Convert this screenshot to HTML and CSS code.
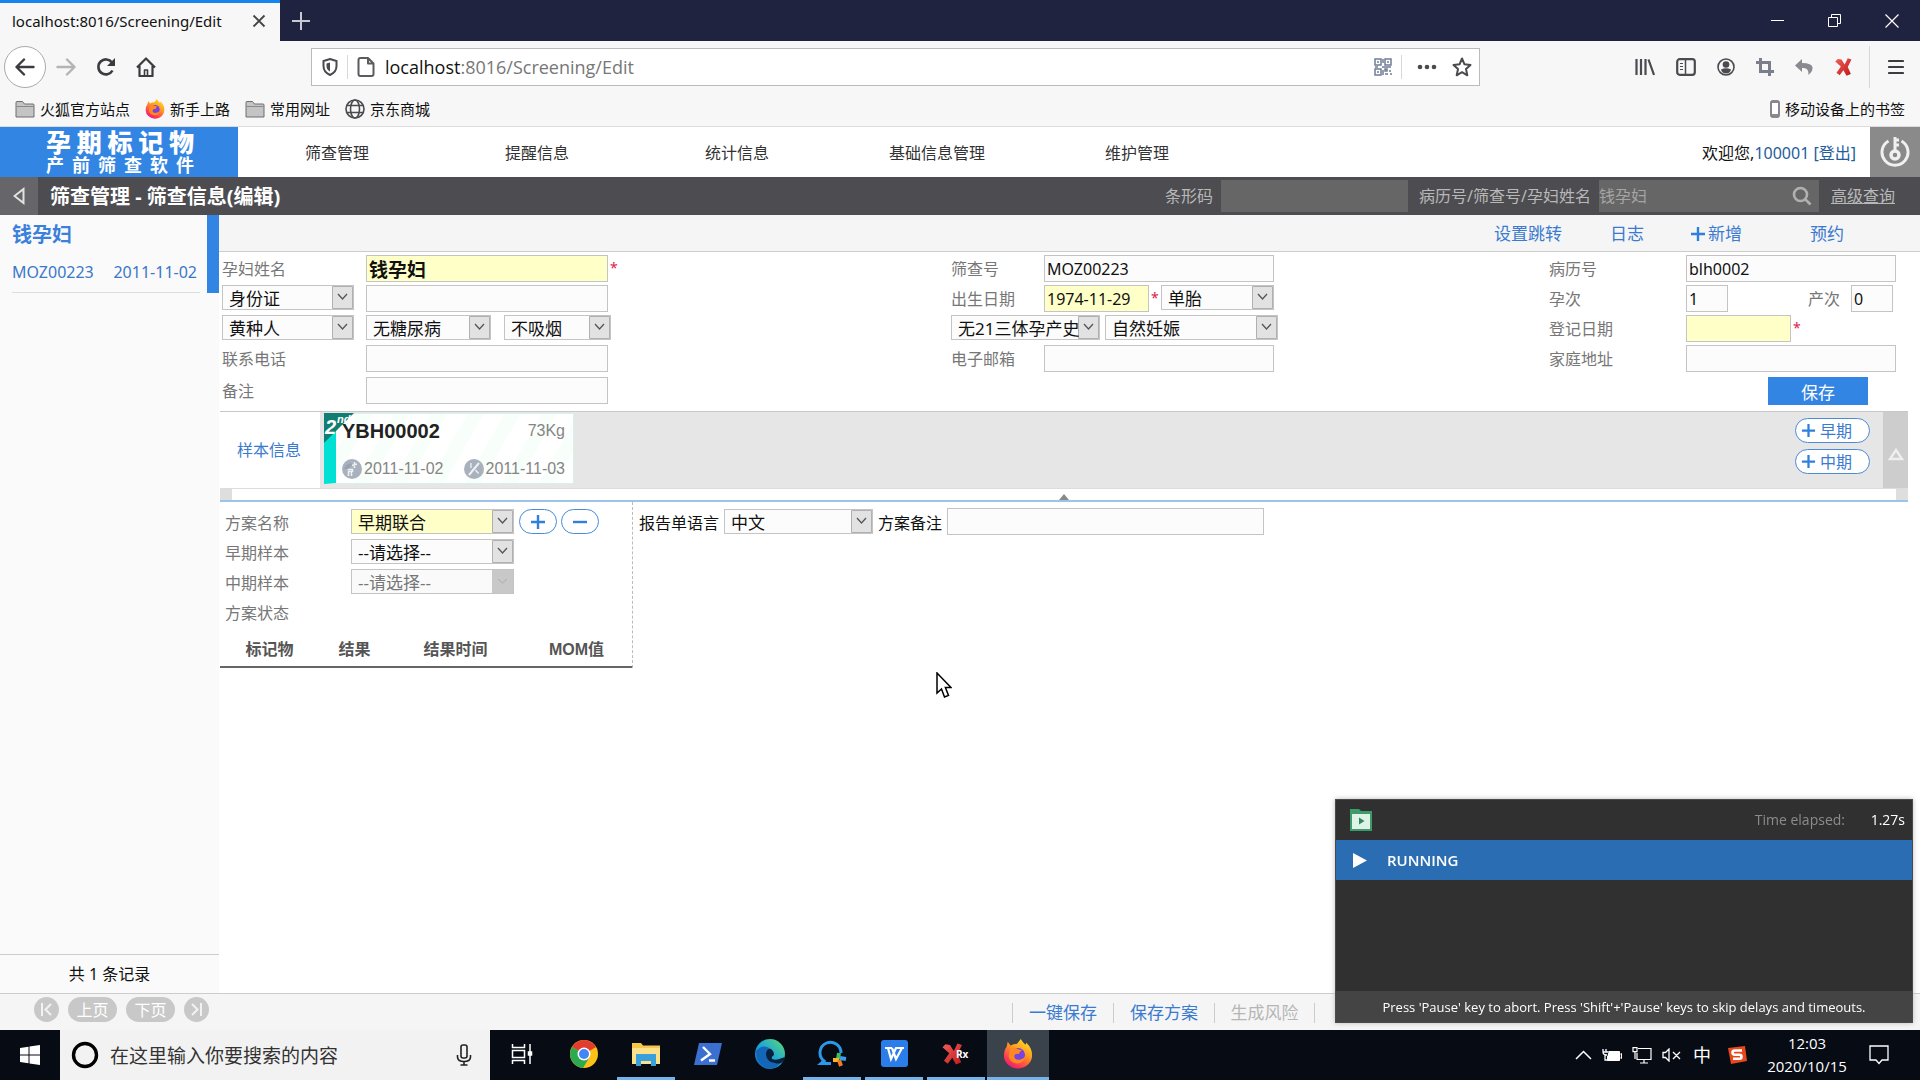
FILE: index.html
```html
<!DOCTYPE html>
<html lang="zh-CN">
<head>
<meta charset="utf-8">
<title>localhost:8016/Screening/Edit</title>
<link rel="stylesheet" href="styles.css">
</head>
<body>
<svg class="defs" width="0" height="0" aria-hidden="true">
  <defs>
    <linearGradient id="fox" x1="0.8" y1="0" x2="0.2" y2="1">
      <stop offset="0" stop-color="#ffe226"/><stop offset="0.4" stop-color="#ff9a1f"/><stop offset="0.75" stop-color="#ff3f4f"/><stop offset="1" stop-color="#e3157c"/>
    </linearGradient>
    <linearGradient id="edge" x1="0" y1="1" x2="1" y2="0">
      <stop offset="0" stop-color="#1266c8"/><stop offset="0.5" stop-color="#1fa7d8"/><stop offset="1" stop-color="#5fdc6a"/>
    </linearGradient>
    <linearGradient id="redx" x1="0" y1="0" x2="1" y2="1">
      <stop offset="0" stop-color="#f0605c"/><stop offset="1" stop-color="#c01818"/>
    </linearGradient>
    <symbol id="i-folder" viewBox="0 0 20 20"><path d="M1 18V3.500q0-1 1-1h5.500l2 2.500H18q1 0 1 1v12z" fill="#c4c4c4" stroke="#6e6e6e"/><path d="M1.500 7.500h17" stroke="#8a8a8a"/></symbol>
    <symbol id="i-firefox" viewBox="0 0 32 32"><path d="M4 8l1-5 3 4q3-2 7-2l4-5q2 4 5 6l1-2q6 6 6 13a15 14 0 0 1-30 1q0-6 3-10z" fill="url(#fox)"/><circle cx="16" cy="17" r="7.500" fill="#7a42e0"/><path d="M8 11q4-3 8 0l4 1q-3 2-3 4-5-1-5 3 1 4 6 3 5-1 6-5-1 9-9 9-8-1-9-8z" fill="#ff8a20"/></symbol>
    <symbol id="i-redx" viewBox="0 0 32 32"><path d="M6 3l6 1 5 8 5-10 6 2-6 12 5 11-7 3-5-9-6 8-5-4 7-10-9-8z" fill="url(#redx)"/></symbol>
    <symbol id="i-plus" viewBox="0 0 16 16"><path d="M8 1v14M1 8h14" stroke="#2f80dd" stroke-width="2.400"/></symbol>
  </defs>
</svg>

<div class="tabbar">
  <div class="tab"><span>localhost:8016/Screening/Edit</span>
    <button class="plain" aria-label="关闭标签页"><svg width="14" height="14" viewBox="0 0 14 14"><path d="M1.500 1.500l11 11M12.500 1.500l-11 11" stroke="#444" stroke-width="1.800"/></svg></button>
  </div>
  <button class="plain newtab" aria-label="新建标签页"><svg width="18" height="18" viewBox="0 0 18 18"><path d="M9 0v18M0 9h18" stroke="#c9c9d4" stroke-width="2"/></svg></button>
  <div class="winctl">
    <button class="plain" aria-label="最小化"><svg width="13" height="13" viewBox="0 0 13 13"><path d="M0 6.500h13" stroke="#fff"/></svg></button>
    <button class="plain" aria-label="还原"><svg width="13" height="13" viewBox="0 0 13 13" fill="none" stroke="#fff"><path d="M.5 3.500h9v9h-9zM3.500 3.500v-3h9v9h-3"/></svg></button>
    <button class="plain" aria-label="关闭"><svg width="14" height="14" viewBox="0 0 14 14"><path d="M.5 .5l13 13M13.500 .5l-13 13" stroke="#fff" stroke-width="1.200"/></svg></button>
  </div>
</div>

<div class="navbar">
  <button class="plain back" aria-label="后退"><svg width="20" height="18" viewBox="0 0 20 18" fill="none" stroke="#3c3c40" stroke-width="2.400" stroke-linecap="round" stroke-linejoin="round"><path d="M18.500 9H2M9 1.500L1.500 9 9 16.500"/></svg></button>
  <button class="plain nav-btn" aria-label="前进"><svg width="20" height="18" viewBox="0 0 20 18" fill="none" stroke="#b4b4b6" stroke-width="2.400" stroke-linecap="round" stroke-linejoin="round"><path d="M1.500 9H18M11 1.500L18.500 9 11 16.500"/></svg></button>
  <button class="plain nav-btn" aria-label="刷新"><svg width="20" height="20" viewBox="0 0 20 20"><path d="M16.500 13.500a7.500 7.500 0 1 1-.5-8" fill="none" stroke="#3c3c40" stroke-width="2.600"/><path d="M19 1v8h-8z" fill="#3c3c40"/></svg></button>
  <button class="plain nav-btn" aria-label="主页"><svg width="20" height="20" viewBox="0 0 20 20" fill="none" stroke="#3c3c40" stroke-width="2.200" stroke-linejoin="round"><path d="M1 10.500L10 1.500l9 9M3.500 9v10h13V9"/><path d="M8.500 19v-6h3v6" stroke-width="1.600"/></svg></button>
  <div class="urlbar">
    <svg width="16" height="18" viewBox="0 0 16 18"><path d="M8 1l6.500 2v5q0 6-6.500 9-6.500-3-6.500-9V3z" fill="none" stroke="#4a4a4f" stroke-width="2"/><path d="M8 4.500v9q-3.500-2-3.500-5.500V5.500z" fill="#4a4a4f"/></svg>
    <i class="vline"></i>
    <svg width="18" height="20" viewBox="0 0 18 20" fill="none" stroke="#5b5b60" stroke-width="2" stroke-linejoin="round"><path d="M1.500 3q0-2 2-2H11l5.500 5.500V17q0 2-2 2h-11q-2 0-2-2zM11 1v5.500h5.500"/></svg>
    <div class="url"><b>localhost</b>:8016/Screening/Edit</div>
    <svg width="18" height="18" viewBox="0 0 18 18" fill="none" stroke="#6f7f96" stroke-width="1.500"><path d="M1 1h6v6H1zM11 1h6v6h-6zM1 11h6v6H1z"/><path d="M3 4h2M13 4h2M3 14h2M9 1v4M8 9h9M1 9h3M11 11h2v2h-2zM15 13h2M11 16h3M16 16h2M9 12v5"/></svg>
    <i class="vline gap-s"></i>
    <svg class="dots" width="20" height="6" viewBox="0 0 20 6" fill="#4a4a4f"><circle cx="3" cy="3" r="2.300"/><circle cx="10" cy="3" r="2.300"/><circle cx="17" cy="3" r="2.300"/></svg>
    <svg width="20" height="20" viewBox="0 0 20 20" fill="none" stroke="#4a4a4f" stroke-width="2" stroke-linejoin="round"><path d="M10 1.500l2.500 5.800 6 .6-4.500 4.200 1.300 6.200L10 15.200l-5.300 3.100L6 12.100 1.500 7.900l6-.6z"/></svg>
  </div>
  <div class="tools">
    <svg width="20" height="18" viewBox="0 0 20 18" stroke="#4a4a4f" stroke-width="2.200"><path d="M1.500 1v16M6 1v16M10.500 1v16M13.500 1.500L19 17"/></svg>
    <svg width="20" height="18" viewBox="0 0 20 18" fill="none" stroke="#4a4a4f" stroke-width="2.200"><rect x="1.200" y="1.200" width="17.600" height="15.600" rx="2.500"/><path d="M9.500 2v14" stroke-width="1.500"/><path d="M4 5.500h3M4 8.500h3M4 11.500h3" stroke-width="1.200"/></svg>
    <svg width="18" height="18" viewBox="0 0 18 18"><circle cx="9" cy="9" r="8" fill="none" stroke="#4a4a4f" stroke-width="1.600"/><circle cx="9" cy="6.500" r="3.300" fill="#4a4a4f"/><path d="M4 11.500q5-2.500 10 0-1 4-5 4t-5-4z" fill="#4a4a4f"/></svg>
    <svg width="18" height="18" viewBox="0 0 18 18" fill="none" stroke="#7b7f8c" stroke-width="3"><path d="M4.500 0v13.500H18M0 4.500h13.500V18"/></svg>
    <svg width="18" height="18" viewBox="0 0 18 18"><path d="M7 1L0 7.500 7 14v-4q7-1 6.500 7Q18 13 17.500 9.500 17 5 7 5z" fill="#8a8a90"/></svg>
    <svg width="20" height="22"><use href="#i-redx"/></svg>
    <i class="vline tall"></i>
    <svg width="16" height="16" viewBox="0 0 16 16" stroke="#3c3c40" stroke-width="2.200" stroke-linecap="round"><path d="M1 2h14M1 8h14M1 14h14"/></svg>
  </div>
</div>

<div class="bookmarks">
  <a href="#"><svg width="20" height="20"><use href="#i-folder"/></svg>火狐官方站点</a>
  <a href="#"><svg width="20" height="20"><use href="#i-firefox"/></svg>新手上路</a>
  <a href="#"><svg width="20" height="20"><use href="#i-folder"/></svg>常用网址</a>
  <a href="#"><svg width="20" height="20" viewBox="0 0 20 20" fill="none" stroke="#4a4a4f" stroke-width="1.600"><circle cx="10" cy="10" r="9"/><ellipse cx="10" cy="10" rx="4.500" ry="9"/><path d="M2 6.500h16M2 13.500h16"/></svg>京东商城</a>
  <a href="#" class="mobile"><svg width="10" height="18" viewBox="0 0 10 18"><rect x=".7" y=".7" width="8.600" height="16.600" rx="1.500" fill="#8a8a90" stroke="#77777c"/><path d="M2 3h6v11H2z" fill="#fff"/></svg>移动设备上的书签</a>
</div>

<header class="site-head">
  <div class="logo"><strong>孕期标记物</strong><em>产前筛查软件</em></div>
  <nav class="menu"><a href="#">筛查管理</a><a href="#">提醒信息</a><a href="#">统计信息</a><a href="#">基础信息管理</a><a href="#">维护管理</a></nav>
  <p class="welcome">欢迎您,<a href="#">100001</a> <a href="#">[登出]</a></p>
  <button class="plain keybtn" aria-label="修改密码"><svg width="30" height="32" viewBox="0 0 30 32" fill="none" stroke="#f0f0f0"><path d="M8.500 5A13 13 0 1 0 21.500 5" stroke-width="3"/><circle cx="15" cy="19" r="4" stroke-width="3.500"/><path d="M15 15V1M15 4h4M15 9h4" stroke-width="3"/></svg></button>
</header>

<div class="titlebar">
  <button class="plain prev" aria-label="返回"><svg width="12" height="18" viewBox="0 0 12 18"><path d="M10.500 2v14L1.500 9z" fill="none" stroke="#e2e2e2" stroke-width="2"/></svg></button>
  <h1>筛查管理 - 筛查信息(编辑)</h1>
  <label for="barcode">条形码</label><input id="barcode" class="barcode">
  <label for="query" class="q-label">病历号/筛查号/孕妇姓名</label>
  <div class="query"><input id="query" placeholder="钱孕妇"><svg width="20" height="20" viewBox="0 0 20 20" fill="none" stroke="#b0b0b0" stroke-width="2.600"><circle cx="8.500" cy="8.500" r="6.500"/><path d="M13.500 13.500L18.500 18.500"/></svg></div>
  <a href="#" class="adv">高级查询</a>
</div>

<div class="content">
  <aside class="sidebar">
    <a href="#" class="patient"><strong>钱孕妇</strong><span><span>MOZ00223</span><span>2011-11-02</span></span></a>
    <p class="total">共 1 条记录</p>
  </aside>

  <main>
    <div class="actions"><a href="#">设置跳转</a><a href="#">日志</a><a href="#"><svg width="16" height="16"><use href="#i-plus"/></svg>新增</a><a href="#">预约</a></div>

    <form class="info">
      <div class="col c1">
        <div class="row"><label for="name">孕妇姓名</label><input id="name" class="w-l need strong" value="钱孕妇"><sup>*</sup></div>
        <div class="row"><div class="cell"><select aria-label="证件类型" class="w-id"><option>身份证</option></select></div><input aria-label="证件号码" class="w-l"></div>
        <div class="row"><div class="cell"><select aria-label="人种" class="w-id"><option>黄种人</option></select></div><select aria-label="糖尿病" class="w-dm"><option>无糖尿病</option></select><select aria-label="吸烟" class="w-smoke"><option>不吸烟</option></select></div>
        <div class="row"><label for="tel">联系电话</label><input id="tel" class="w-l"></div>
        <div class="row last"><label for="memo">备注</label><input id="memo" class="w-l"></div>
      </div>
      <div class="col c2">
        <div class="row"><label for="sno">筛查号</label><input id="sno" class="w-m" value="MOZ00223"></div>
        <div class="row"><label for="birth">出生日期</label><input id="birth" class="w-date need" value="1974-11-29"><sup>*</sup><select aria-label="胎数" class="w-fetus"><option>单胎</option></select></div>
        <div class="row"><select aria-label="21三体孕产史" class="w-hist"><option>无21三体孕产史</option></select><select aria-label="妊娠方式" class="w-preg"><option>自然妊娠</option></select></div>
        <div class="row"><label for="mail">电子邮箱</label><input id="mail" class="w-m"></div>
      </div>
      <div class="col c3">
        <div class="row"><label for="rec">病历号</label><input id="rec" class="fill" value="blh0002"></div>
        <div class="row"><label for="grav">孕次</label><input id="grav" class="w-xs" value="1"><label for="para" class="para">产次</label><input id="para" class="w-xs" value="0"></div>
        <div class="row"><label for="reg">登记日期</label><input id="reg" class="w-date need"><sup>*</sup></div>
        <div class="row"><label for="addr">家庭地址</label><input id="addr" class="fill"></div>
        <div class="row last"><button type="button" class="save">保存</button></div>
      </div>
    </form>

    <section class="samples">
      <h2>样本信息</h2>
      <article class="card">
        <svg class="badge" width="30" height="30" viewBox="0 0 30 30"><path d="M0 0h30L0 30z" fill="#127d71"/><text x="1" y="21" class="badge-n">2</text><text x="13" y="10" class="badge-s">nd</text></svg>
        <div class="card-line"><strong>YBH00002</strong><span>73Kg</span></div>
        <div class="card-line dates">
          <span><svg width="20" height="20" viewBox="0 0 20 20"><circle cx="10" cy="10" r="10" fill="#a9b1bd"/><path d="M5.500 10.500l5 0 0 2.500M6.500 17v-4.500h3V17M10 6.500l5-1.500M12.500 3v6" stroke="#eef1f5" stroke-width="1.500" fill="none"/><path d="M2 10q2-5 7-6l1 2-4 4z" fill="#98a2b1"/></svg>2011-11-02</span>
          <span><svg width="20" height="20" viewBox="0 0 20 20"><circle cx="10" cy="10" r="10" fill="#a9b1bd"/><path d="M15 4L5 16" stroke="#eef1f5" stroke-width="2"/><path d="M7 4v5M11.500 11l3 3.500" stroke="#eef1f5" stroke-width="1.300"/></svg>2011-11-03</span>
        </div>
      </article>
      <div class="adders"><button type="button" class="pill"><svg width="15" height="15"><use href="#i-plus"/></svg>早期</button><button type="button" class="pill"><svg width="15" height="15"><use href="#i-plus"/></svg>中期</button></div>
      <button class="plain scroll" aria-label="收起"><svg width="18" height="14" viewBox="0 0 18 14"><path d="M9 3l6 9H3z" fill="none" stroke="#efefef" stroke-width="2.400"/></svg></button>
    </section>
    <div class="splitter"><svg width="10" height="6" viewBox="0 0 10 6"><path d="M5 0l5 6H0z" fill="#8a8a8a"/></svg></div>

    <div class="plan">
      <section class="plan-left">
        <div class="prow"><label for="plan">方案名称</label><select id="plan" class="w-plan need"><option>早期联合</option></select><button type="button" class="pill round" aria-label="添加"><svg width="16" height="16"><use href="#i-plus"/></svg></button><button type="button" class="pill round" aria-label="删除"><svg width="16" height="16" viewBox="0 0 16 16"><path d="M1 8h14" stroke="#2f80dd" stroke-width="2.400"/></svg></button></div>
        <div class="prow"><label for="early">早期样本</label><select id="early" class="w-plan"><option>--请选择--</option></select></div>
        <div class="prow"><label for="mid">中期样本</label><select id="mid" class="w-plan" disabled><option>--请选择--</option></select></div>
        <div class="prow"><span class="lab">方案状态</span></div>
        <table><colgroup><col class="k1"><col class="k2"><col class="k3"><col class="k4"></colgroup><thead><tr><th>标记物</th><th>结果</th><th>结果时间</th><th>MOM值</th></tr></thead></table>
      </section>
      <section class="plan-right">
        <label for="lang">报告单语言</label><select id="lang" class="w-lang"><option>中文</option></select>
        <label for="pmemo">方案备注</label><input id="pmemo" class="w-memo">
      </section>
    </div>
  </main>
</div>

<footer class="foot">
  <div class="pager">
    <button class="dot" aria-label="首页"><svg width="13" height="13" viewBox="0 0 13 13" fill="none" stroke="#f2f2f2" stroke-width="2"><path d="M2 0v13M11 1L5.500 6.500 11 12"/></svg></button><button>上页</button><button>下页</button><button class="dot" aria-label="末页"><svg width="13" height="13" viewBox="0 0 13 13" fill="none" stroke="#f2f2f2" stroke-width="2"><path d="M11 0v13M2 1l5.500 5.500L2 12"/></svg></button>
  </div>
  <nav class="ops"><a href="#">一键保存</a><a href="#">保存方案</a><a href="#" class="off">生成风险</a></nav>
</footer>

<div class="taskbar">
  <button class="plain start" aria-label="开始"><svg width="20" height="20" viewBox="0 0 20 20" fill="#fff"><path d="M0 3l8.500-1.200v7.700H0zM9.500 1.600L20 0v9.500H9.500zM0 10.500h8.500v7.700L0 17zM9.500 10.500H20V20L9.500 18.400z"/></svg></button>
  <div class="search"><svg width="28" height="28" viewBox="0 0 28 28"><circle cx="14" cy="14" r="11.500" fill="none" stroke="#000" stroke-width="3.400"/></svg><input aria-label="搜索" placeholder="在这里输入你要搜索的内容"><svg width="16" height="22" viewBox="0 0 16 22" fill="none" stroke="#222" stroke-width="1.600"><rect x="5" y="1" width="6" height="13" rx="2"/><path d="M1.500 11v2q0 4.500 6.500 4.500t6.500-4.500v-2M8 17.500V21M4.500 21h7"/></svg></div>
  <div class="apps">
    <button class="plain" aria-label="任务视图"><svg width="22" height="20" viewBox="0 0 22 20" fill="none" stroke="#fff" stroke-width="1.500"><path d="M1.500 0v3.500h12V0M1.500 6.500h12v7h-12zM1.500 20v-3.500h12V20M19 0v20"/><path d="M17.500 8h3v3h-3z" fill="#fff"/></svg></button>
    <button class="plain" aria-label="Chrome"><svg width="28" height="28" viewBox="0 0 28 28"><circle cx="14" cy="14" r="14" fill="#fbc116"/><path d="M14 14L1.900 7A14 14 0 0 1 26.100 7z" fill="#e33b2e"/><path d="M14 14L1.900 7A14 14 0 0 0 13 28l6-10z" fill="#2da94f"/><circle cx="14" cy="14" r="6.500" fill="#fff"/><circle cx="14" cy="14" r="5" fill="#4285f4"/></svg></button>
    <button class="plain on" aria-label="文件资源管理器"><svg width="28" height="24" viewBox="0 0 28 24"><path d="M0 1h9l2 2.500h17V22H0z" fill="#f7c64a"/><path d="M0 6h28v16H0z" fill="#fde08a"/><path d="M4 12h20v12h-5v-5H9v5H4z" fill="#3aa0dc"/></svg></button>
    <button class="plain" aria-label="PowerShell"><svg width="28" height="22" viewBox="0 0 28 22"><path d="M5 0h23l-5 22H0z" fill="#3b6fd0"/><path d="M9 4l7 7-9 6.500M15 17.500h6" fill="none" stroke="#fff" stroke-width="2.400"/></svg></button>
    <button class="plain" aria-label="Edge"><svg width="30" height="30" viewBox="0 0 30 30"><circle cx="15" cy="15" r="15" fill="url(#edge)"/><path d="M1 12q7-8 15-2-4 1-4 6 1 8 9 8 3 0 5-1-6 9-15 6Q1 25 1 12z" fill="#1467b8"/><path d="M16 10q3 2 3 6-3 2-2 4 4 2 10-1l3-1-1 4-3 2q-3 1-6 0-8-1-9-8 0-5 3-6z" fill="#08203c"/></svg></button>
    <button class="plain on" aria-label="QQ浏览器"><svg width="30" height="28" viewBox="0 0 30 28" fill="none"><path d="M24 13A10.500 10.500 0 1 0 7 21l-3 2.500h10" stroke="#2b98ea" stroke-width="3"/><path d="M22 13l-1 6" stroke="#3ec05c" stroke-width="4"/><path d="M16 20l6 0" stroke="#f7b824" stroke-width="4"/><path d="M22 20l2 6" stroke="#f07a24" stroke-width="4"/><path d="M23 18l6 1" stroke="#3a9df0" stroke-width="4"/></svg></button>
    <button class="plain on" aria-label="WPS"><svg width="27" height="27" viewBox="0 0 27 27"><rect width="27" height="27" rx="3" fill="#2b7de9"/><path d="M4 8h7M7 8l3 11 5-11h4M11 8l4 11 6-11M19 8h4" fill="none" stroke="#fff" stroke-width="2.200"/></svg></button>
    <button class="plain on" aria-label="Ranorex"><svg width="30" height="28" viewBox="0 0 30 28"><use href="#i-redx" width="24" height="28"/><text x="15" y="18" class="rx">Rx</text></svg></button>
    <button class="plain on current" aria-label="Firefox"><svg width="30" height="30"><use href="#i-firefox"/></svg></button>
  </div>
  <div class="tray">
    <svg width="17" height="10" viewBox="0 0 17 10" fill="none" stroke="#fff" stroke-width="1.500"><path d="M1 9l7.500-7.500L16 9"/></svg>
    <svg width="20" height="14" viewBox="0 0 20 14"><path d="M6.500 3.500h11v9h-12V8" fill="#fff" stroke="#fff"/><path d="M18.500 6h1v4h-1M1 1v3q0 3 4 3M4 1v3M1 4h5M3 6v6h3" stroke="#fff" stroke-width="1.300" fill="none"/></svg>
    <svg width="20" height="17" viewBox="0 0 20 17" fill="none" stroke="#fff" stroke-width="1.200"><path d="M6 1.500h13v11H5V6M12 12.500V16M8 16h8M1 .6h4v4H1zM3 5v7"/></svg>
    <svg width="19" height="14" viewBox="0 0 19 14" fill="none" stroke="#fff" stroke-width="1.300"><path d="M1 4.500h2.500L7 1v12L3.500 9.500H1zM11 4l7 7M18 4l-7 7"/></svg>
    <span class="ime">中</span>
    <svg width="20" height="18" viewBox="0 0 20 18"><path d="M1 2L18 0l2 15-16 3z" fill="#e8481c"/><path d="M15 4.500H8q-2.500 0-2.500 2T8 8.800h4.500q2 0 2 2t-2 2H6" fill="none" stroke="#fff" stroke-width="2.600"/></svg>
    <time>12:03<br>2020/10/15</time>
    <svg class="note" width="20" height="20" viewBox="0 0 20 20" fill="none" stroke="#fff" stroke-width="1.300"><path d="M1 1h18v14h-6l-3 3.500L7 15H1z"/></svg>
  </div>
</div>

<section class="runner">
  <header><svg width="22" height="22" viewBox="0 0 22 22"><path d="M0 0h9l2 2h11v20H0z" fill="#3d9b6b"/><path d="M2 5h18v15H2z" fill="#dff2e7"/><path d="M9 8.500v7l5.500-3.500z" fill="#2f8a5a"/></svg><span>Time elapsed:</span><b>1.27s</b></header>
  <div class="state"><svg width="14" height="15" viewBox="0 0 14 15"><path d="M0 0l14 7.500L0 15z" fill="#fff"/></svg>RUNNING</div>
  <div class="void"></div>
  <p>Press 'Pause' key to abort. Press 'Shift'+'Pause' keys to skip delays and timeouts.</p>
</section>
<svg class="cursor" width="16" height="27" viewBox="0 0 16 27"><path d="M1 1v20l4.500-4L8.500 25l4-1.600L9.400 15.500H15z" fill="#fff" stroke="#000" stroke-width="1.500"/></svg>
</body>
</html>
```
FILE: styles.css
```css
* { box-sizing: border-box; }
body {
  margin: 0;
  min-height: 100vh;
  display: flex;
  flex-direction: column;
  background: #fff;
  color: #111;
  font: 16px/20px "Noto Sans", "Noto Sans CJK SC", sans-serif;
}
a { color: inherit; text-decoration: none; }
p, h1, h2 { margin: 0; font-size: inherit; font-weight: inherit; }
svg { flex: none; display: block; }
.defs { position: absolute; }
input, select, button { font: inherit; color: inherit; border-radius: 0; margin: 0; }
.plain { border: 0; background: none; padding: 0; display: flex; align-items: center; justify-content: center; }

/* Browser chrome */
.tabbar { height: 41px; background: #20233f; display: flex; }
.tab { width: 280px; background: #f7f7f8; border-top: 3px solid #1584ee; display: flex; align-items: center; justify-content: space-between; padding: 0 14px 2px 12px; font: 15px/20px "Noto Sans", sans-serif; color: #111; }
.newtab { width: 42px; }
.winctl { margin-left: auto; display: flex; }
.winctl button { width: 57px; }
.navbar { height: 51px; background: #f7f7f8; display: flex; align-items: center; padding: 0 16px 0 4px; }
.back { width: 42px; height: 42px; border: 1px solid #aaa; border-radius: 50%; background: #fff; }
.nav-btn { width: 40px; height: 40px; }
.urlbar { flex: 1; height: 38px; margin-left: 145px; border: 1px solid #bbb; background: #fff; display: flex; align-items: center; padding: 0 7px 0 10px; gap: 9px; }
.url { flex: 1; padding-left: 1px; font: 18px/24px "Open Sans", sans-serif; color: #777; }
.url b { font-weight: 400; color: #111; }
.vline { width: 1px; height: 24px; background: #d8d8d8; }
.gap-s { margin-right: 6px; }
.dots { margin-right: 6px; }
.tools { display: flex; align-items: center; gap: 21px; margin-left: 155px; }
.tools .vline { height: 42px; margin: 0 -3px 0 -6px; }
.bookmarks { height: 35px; background: #f7f7f8; border-bottom: 1px solid #dcdcdc; display: flex; align-items: center; padding: 0 15px 1px; gap: 15px; font-size: 15px; }
.bookmarks a { display: flex; align-items: center; gap: 5px; }
.bookmarks .mobile { margin-left: auto; }

/* Site header */
.site-head { height: 50px; display: flex; align-items: center; }
.logo { width: 238px; height: 50px; background: #3385e3; color: #fff; padding: 2px 44px 0 46px; display: flex; flex-direction: column; font-weight: 700; text-align-last: justify; }
.logo strong { font-size: 25px; line-height: 26px; }
.logo em { font-size: 18px; line-height: 20px; font-style: normal; }
.menu { display: flex; flex: 1; }
.menu a { width: 200px; text-align: center; color: #333; line-height: 50px; padding: 1px 2px 0 0; }
.welcome { margin-right: 14px; padding-top: 2px; white-space: pre; }
.welcome a { color: #1f5d9c; }
.keybtn { width: 50px; height: 50px; background: #8a8a8a; }
.titlebar { height: 38px; background: #4d4d51; color: #b8b8b8; display: flex; align-items: center; padding-right: 25px; }
.prev { width: 38px; height: 38px; background: #66666a; }
.titlebar h1 { flex: 1; margin-left: 12px; padding-top: 2px; color: #fff; font-size: 20px; font-weight: 700; }
.titlebar input { height: 32px; border: 0; background: #666; outline: 0; padding: 0; }
.barcode { width: 187px; margin-left: 8px; }
.q-label { margin: 0 8px 0 11px; }
.query { display: flex; width: 220px; background: #666; align-items: center; padding-right: 7px; }
.query input { flex: 1; min-width: 0; }
.query ::placeholder { color: #a5a5a5; opacity: 1; }
.adv { margin-left: 12px; text-decoration: underline; }

/* Sidebar */
.content { flex: 1; display: flex; }
.sidebar { width: 219px; display: flex; flex-direction: column; background: #fafafa; }
.patient { display: flex; flex-direction: column; height: 78px; border-right: 12px solid #3385e3; padding: 8px 10px 0 12px; color: #3a78c8; background: linear-gradient(#ddd, #ddd) 12px 100% / 188px 1px no-repeat; }
.patient strong { font-size: 20px; line-height: 24px; color: #3a80dc; }
.patient > span { display: flex; justify-content: space-between; margin-top: 15px; }
.total { margin-top: auto; height: 39px; border-top: 1px solid #ccc; text-align: center; line-height: 38px; }

/* Main */
main { flex: 1; min-width: 0; padding-left: 1px; }
.actions { height: 37px; margin-left: -1px; background: #f5f5f5; border-bottom: 1px solid #ccc; display: flex; justify-content: flex-end; align-items: center; padding: 2px 76px 0 0; color: #3a7ad0; font-size: 17px; }
.actions a { display: flex; align-items: center; gap: 2px; }
.actions a + a { margin-left: 48px; }
.actions a:nth-child(3) { margin-left: 46px; }
.actions a:last-child { margin-left: 68px; }
.info { display: flex; padding: 3px 24px 0 2px; height: 159px; }
.col { display: flex; flex-direction: column; gap: 3px; min-width: 0; }
.c1 { flex: 729; }
.c2 { flex: 598; }
.c3 { flex: 347; }
.row { display: flex; height: 27px; align-items: flex-start; }
.row.last { margin-top: 2px; }
.row label, .prow label, .lab { color: #777; line-height: 29px; }
.c1 .row > label, .cell { width: 144px; }
.c2 .row > label { width: 93px; }
.c3 .row > label { width: 137px; }
.c3 .row > .para { width: 43px; margin-left: auto; }
.para + input { margin-right: 3px; }
input { height: 27px; border: 1px solid #c4c4c4; background: #fcfcfc; padding: 1px 2px 0; min-width: 0; }
select { appearance: none; height: 25px; border: 1px solid #c4c4c4; padding: 3px 0 0 6px; font-size: 17px; line-height: 20px; background: #fcfcfc url("data:image/svg+xml,%3Csvg xmlns='http://www.w3.org/2000/svg' width='21' height='23'%3E%3Cpath d='M.5 .5h20v22H.5z' fill='%23e2e2e2' stroke='%23b0b0b0'/%3E%3Cpath d='M6 8l4.500 5L15 8' fill='none' stroke='%23555' stroke-width='1.300'/%3E%3C/svg%3E") right center no-repeat; opacity: 1; }
select:disabled { color: #777; background-color: #fafafa; background-image: url("data:image/svg+xml,%3Csvg xmlns='http://www.w3.org/2000/svg' width='21' height='23'%3E%3Cpath d='M0 0h21v23H0z' fill='%23c8c8c8'/%3E%3Cpath d='M6 9l4.500 4L15 9' fill='none' stroke='%23aaa'/%3E%3C/svg%3E"); }
.need { background-color: #ffffc8; }
.strong { font-size: 19px; font-weight: 700; }
sup { color: #e0204a; font-size: 14px; line-height: 26px; margin-left: 2px; width: 10px; }
.w-l { width: 242px; }
.w-m { width: 230px; }
.w-id { width: 132px; }
.w-dm { width: 125px; margin-right: 13px; }
.w-smoke { width: 107px; }
.w-date { width: 105px; }
.w-fetus { width: 113px; }
.w-hist { width: 149px; margin-right: 5px; }
.w-preg { width: 173px; }
.w-xs { width: 42px; }
.fill { flex: 1; }
.save { width: 100px; height: 28px; margin: 0 28px 0 auto; border: 0; background: #3385e3; color: #fff; font-size: 17px; padding: 4px 0 0; line-height: 24px; }

/* Sample strip */
.samples { display: flex; height: 77px; margin-right: 12px; background: #e6e6e6; border-top: 1px solid #c8c8c8; }
.samples h2 { width: 100px; background: #fff; color: #3a7ad0; text-align: center; line-height: 76px; padding-right: 2px; }
.card { position: relative; width: 250px; height: 71px; margin: 1px 0 0 4px; padding: 7px 8px 0 6px; border: 1px solid #d6f2ea; border-left: 12px solid #00e0d4; background: repeating-linear-gradient(120deg, #fff 0 18px, #f8fef9 18px 32px); font-family: "Liberation Sans", sans-serif; color: #858585; }
.badge { position: absolute; left: -12px; top: -1px; }
.badge-n { font: italic bold 20px "Liberation Sans", sans-serif; fill: #fff; }
.badge-s { font: italic bold 11px "Liberation Sans", sans-serif; fill: #fff; }
.card-line { display: flex; justify-content: space-between; }
.card-line strong { position: relative; font-size: 20px; color: #222; }
.dates { margin-top: 18px; }
.dates span { display: flex; gap: 2px; }
.adders { margin-left: auto; padding: 6px 13px 0 0; display: flex; flex-direction: column; gap: 6px; }
.pill { width: 75px; height: 25px; border: 1px solid #4a8ad8; border-radius: 13px; background: #fff; color: #3a7ad0; display: flex; align-items: center; gap: 4px; padding: 0 5px; line-height: 20px; }
.scroll { width: 25px; padding-top: 8px; background: #cdcdcd; }
.splitter { height: 14px; margin-right: 12px; border-top: 1px solid #dcdcdc; border-bottom: 2px solid #9cc3ea; display: flex; justify-content: center; align-items: flex-end; background: linear-gradient(90deg, #dedede 12px, #fff 12px calc(100% - 12px), #dedede calc(100% - 12px)); }

/* Plan */
.plan { display: flex; }
.plan-left { width: 413px; border-right: 1px dashed #bbb; padding-top: 7px; }
.prow { display: flex; height: 30px; padding-left: 5px; gap: 5px; }
.prow label { width: 121px; }
.round { width: 38px; justify-content: center; border-radius: 13px; }
.round + .round { margin-left: -1px; }
.w-plan { width: 163px; }
table { width: 100%; border-collapse: collapse; table-layout: fixed; margin-top: 4px; border-bottom: 2px solid #666; }
th { height: 34px; padding: 0; font-family: "Liberation Sans", "Noto Sans CJK SC", sans-serif; color: #555; }
.k1 { width: 99px; }
.k2 { width: 71px; }
.k3 { width: 131px; }
.plan-right { display: flex; padding: 6px 0 0 6px; gap: 5px; }
.plan-right label { line-height: 30px; }
.plan-right select { margin-top: 1px; }
.w-lang { width: 149px; }
.w-memo { width: 317px; }

/* Footer */
.foot { height: 37px; border-top: 1px solid #ccc; background: #f5f5f5; display: flex; align-items: center; justify-content: space-between; }
.pager { display: flex; gap: 9px; padding: 0 0 5px 34px; }
.pager button { width: 49px; height: 25px; border: 0; border-radius: 13px; background: #c8c8c8; color: #fff; padding: 0; display: flex; align-items: center; justify-content: center; }
.pager .dot { width: 25px; }
.ops { display: flex; margin-right: 605px; padding-top: 2px; color: #3a7ad0; font-size: 17px; }
.ops a { width: 101px; border-left: 1px solid #ccc; text-align: center; }
.ops a:last-child { border-right: 1px solid #ccc; }
.ops .off { color: #b5b5b5; }

/* Taskbar */
.taskbar { height: 50px; background: #060b14; display: flex; color: #fff; }
.start { width: 60px; }
.search { width: 430px; background: #f2f2f2; display: flex; align-items: center; padding: 0 18px 0 11px; gap: 9px; }
.search input { flex: 1; border: 0; background: none; font-size: 19px; height: 30px; }
.search ::placeholder { color: #333; opacity: 1; }
.apps { display: flex; padding-left: 1px; }
.apps button { width: 62px; border-bottom: 3px solid transparent; }
.apps .on { border-image: linear-gradient(90deg, transparent 5px, #76b3e8 5px 57px, transparent 57px) 3; border-style: solid; border-width: 0 0 3px; }
.apps .current { background: #3a424c; border-image: linear-gradient(#76b3e8, #76b3e8) 3; }
.rx { font: bold 10px "Open Sans", sans-serif; fill: #fff; }
.tray { margin-left: auto; display: flex; align-items: center; gap: 10px; padding-right: 31px; }
.ime { width: 20px; margin: 0 4px 0 2px; font-size: 18px; }
.tray time { width: 100px; text-align: center; font: 15px/23px "Open Sans", sans-serif; }
.note { margin-left: 2px; }

/* Overlays */
.runner { position: fixed; right: 7px; bottom: 57px; width: 578px; background: #303030; border: 1px solid #4a4a4a; color: #fff; font: 14px/20px "Open Sans", sans-serif; box-shadow: 0 0 5px #bbb; }
.runner header { height: 40px; display: flex; align-items: center; padding: 0 7px 0 14px; }
.runner header span { margin-left: auto; color: #8c8c8c; }
.runner header b { font-weight: 400; width: 60px; text-align: right; }
.state { height: 40px; background: #2a6db2; display: flex; align-items: center; gap: 20px; padding-left: 17px; font-size: 15px; font-weight: 600; }
.void { height: 111px; }
.runner p { height: 31px; background: #444; font-size: 13px; line-height: 32px; text-align: center; }
.cursor { position: fixed; left: 936px; top: 672px; }
```
